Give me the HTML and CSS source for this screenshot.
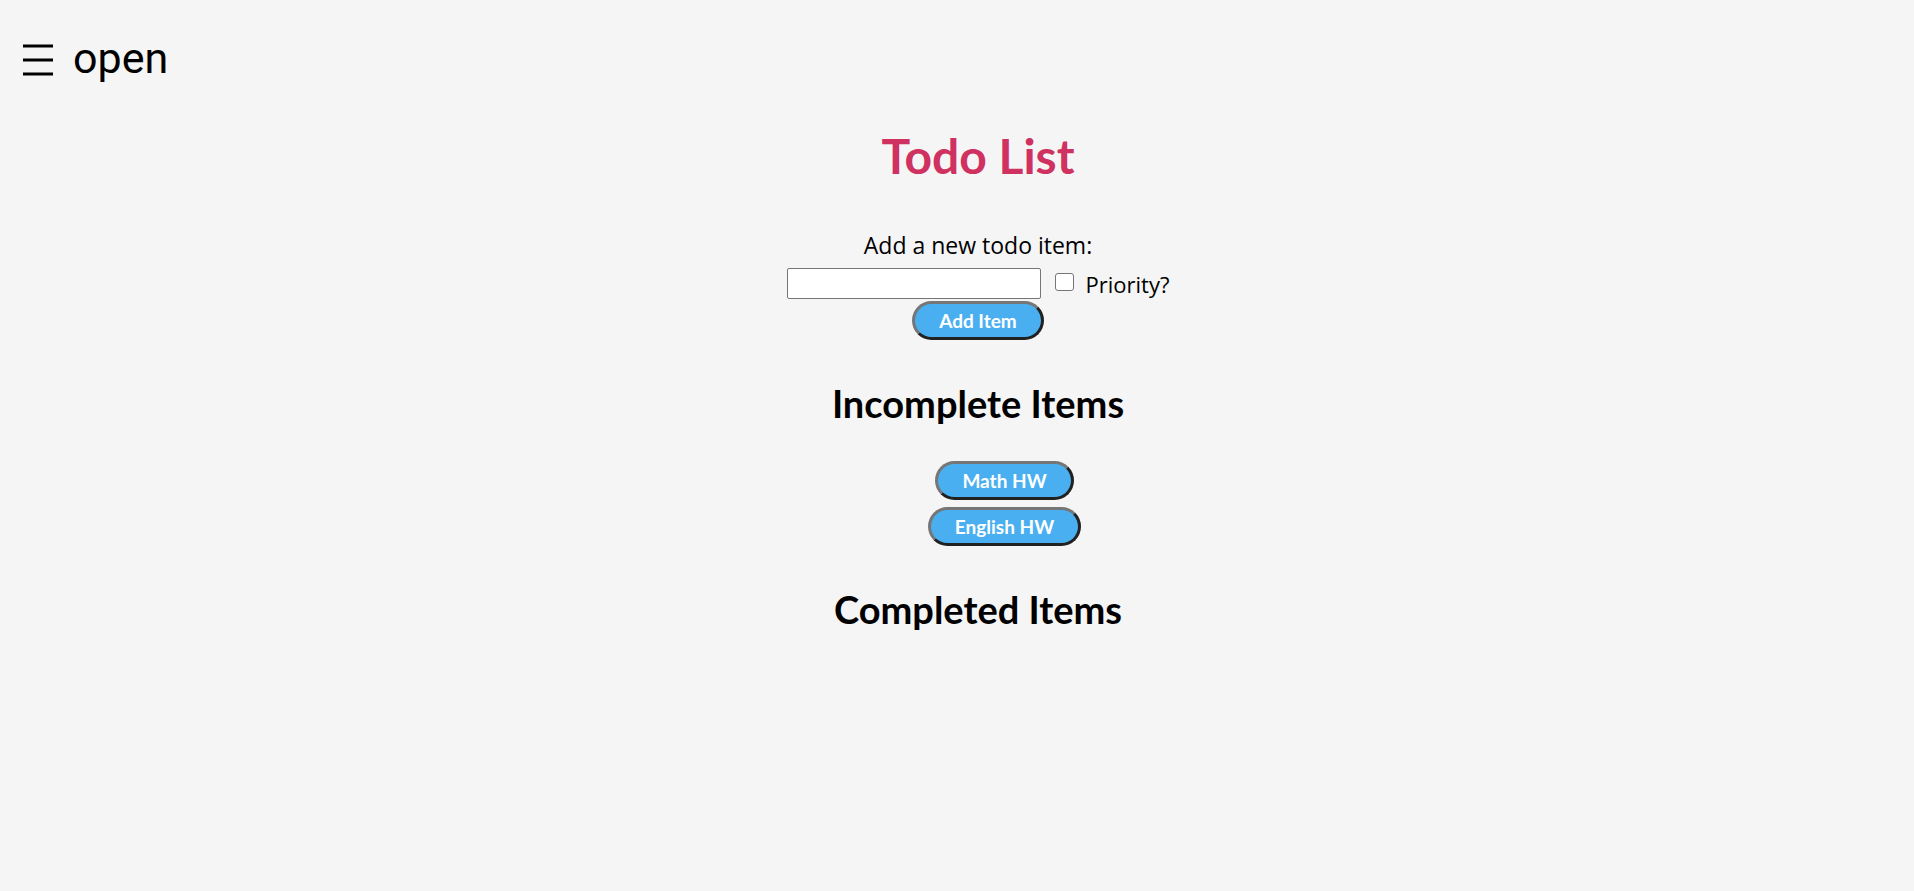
FILE: index.html
```html
<!DOCTYPE html>
<html lang="en">
<head>
<meta charset="utf-8">
<title>Todo List</title>
<link rel="stylesheet" href="styles.css">
</head>
<body>
<div class="topbar">
  <span class="opener"><svg class="burger" width="30" height="32" viewBox="0 0 30 32"><rect x="0" y="0.5" width="30" height="3"/><rect x="0" y="14.5" width="30" height="3"/><rect x="0" y="28.5" width="30" height="3"/></svg><span class="opener-text">open</span></span>
</div>
<main class="main">
  <h1 class="title">Todo List</h1>
  <form class="add-form">
    <label class="add-label" for="item">Add a new todo item:</label>
    <div class="input-row">
      <input class="text-input" id="item" type="text">
      <input class="check" id="prio" type="checkbox">
      <label class="prio-label" for="prio">Priority?</label>
    </div>
    <button class="pill" type="button">Add Item</button>
  </form>
  <h2 class="section-title">Incomplete Items</h2>
  <ul class="items">
    <li><button class="pill" type="button">Math HW</button></li>
    <li><button class="pill" type="button">English HW</button></li>
  </ul>
  <h2 class="section-title section-title--done">Completed Items</h2>
</main>
</body>
</html>
```
FILE: styles.css
```css
html, body {
  margin: 0;
  padding: 0;
  background: #f5f5f5;
}
body {
  font-family: Lato, "Open Sans", sans-serif;
  color: #000;
}
.topbar {
  padding: 32px 0 0 23px;
  height: 52px;
}
.opener {
  display: inline-flex;
  align-items: center;
  font-family: Roboto, "Noto Sans", sans-serif;
  font-size: 43px;
  line-height: 52px;
  cursor: pointer;
}
.burger {
  fill: #000;
  margin-right: 20px;
  margin-top: 4px;
}
.main {
  padding-left: 42px;
  text-align: center;
}
.title {
  margin: 44px 0 0;
  font-size: 48px;
  line-height: 56px;
  font-weight: 700;
  color: #cf3160;
}
.add-form {
  margin: 47px 0 0;
  display: flex;
  flex-direction: column;
  align-items: center;
}
.add-label,
.prio-label {
  font-family: "Open Sans", Lato, sans-serif;
  font-size: 23px;
  line-height: 28px;
}
.input-row {
  margin-top: 9px;
  display: flex;
  align-items: center;
  height: 31px;
}
.text-input {
  box-sizing: border-box;
  width: 254px;
  height: 31px;
  margin: 0;
  border: 1px solid #767676;
  border-radius: 2px;
  background: #fff;
  font-size: 20px;
}
.check {
  appearance: none;
  -webkit-appearance: none;
  box-sizing: border-box;
  width: 19px;
  height: 18px;
  margin: 0 0 4px 14px;
  border: 1px solid #767676;
  border-radius: 3px;
  background: #fff;
}
.prio-label {
  margin-left: 12px;
  font-size: 22px;
}
.pill {
  box-sizing: border-box;
  height: 39px;
  padding: 0 24px;
  border: 3px outset #767676;
  border-radius: 20px;
  background: #4aaff0;
  color: #fff;
  font-family: Lato, "Open Sans", sans-serif;
  font-weight: 700;
  font-size: 19px;
  cursor: pointer;
}
.add-form .pill {
  margin-top: 2px;
}
.section-title {
  margin: 42px 0 0;
  font-size: 38px;
  line-height: 42px;
  font-weight: 700;
}
.items {
  list-style: none;
  margin: 37px 0 0;
  padding: 0 0 0 53px;
  display: flex;
  flex-direction: column;
  align-items: center;
  gap: 7px;
}
.section-title--done {
  margin-top: 42px;
}
```
